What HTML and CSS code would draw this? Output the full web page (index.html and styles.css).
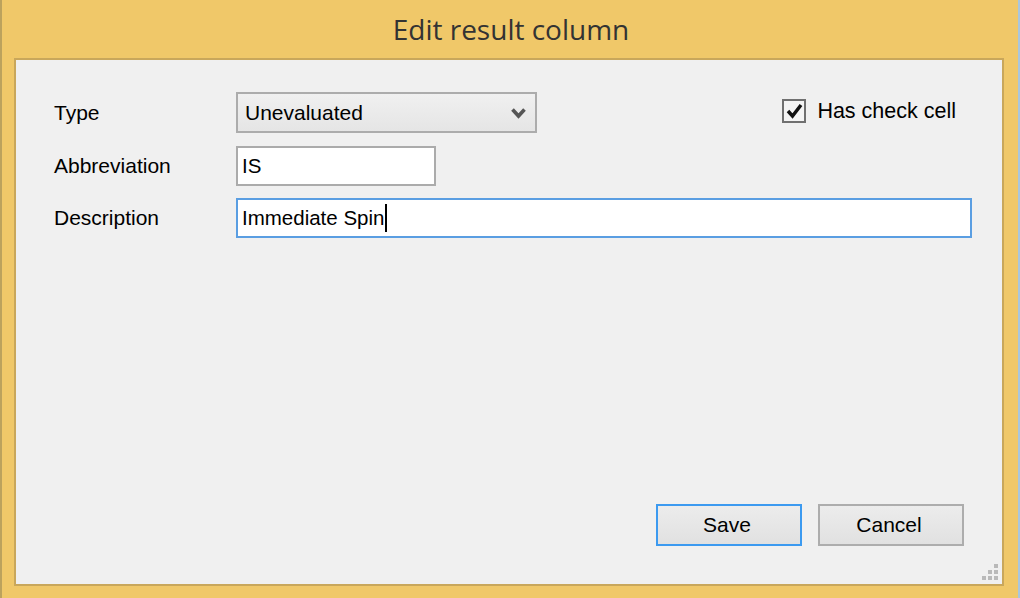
FILE: index.html
```html
<!DOCTYPE html>
<html lang="en">
<head>
<meta charset="utf-8">
<title>Edit result column</title>
<link rel="stylesheet" href="styles.css">
</head>
<body>
<div class="window">
  <div class="titlebar">Edit result column</div>
  <div class="client">
    <div class="form">
      <div class="row row-type">
        <span class="lbl">Type</span>
        <div class="combo">
          <span class="combo-text">Unevaluated</span>
          <svg class="chev" width="15" height="12" viewBox="0 0 15 12"><path d="M1.5 2.5 L7.5 9 L13.5 2.5" fill="none" stroke="#555" stroke-width="3.6"/></svg>
        </div>
        <div class="check">
          <span class="box"><svg width="19" height="20" viewBox="0 0 19 20"><path d="M3 10 L7.5 15 L16 4" fill="none" stroke="#111" stroke-width="3.4"/></svg></span>
          <span class="check-text">Has check cell</span>
        </div>
      </div>
      <div class="row">
        <span class="lbl">Abbreviation</span>
        <div class="field abbr">IS</div>
      </div>
      <div class="row">
        <span class="lbl">Description</span>
        <div class="field desc focused">Immediate Spin<span class="caret"></span></div>
      </div>
    </div>
    <div class="buttons">
      <div class="btn default">Save</div>
      <div class="btn">Cancel</div>
    </div>
    <div class="grip">
      <span class="dot d1"></span>
      <span class="dot d2"></span><span class="dot d3"></span>
      <span class="dot d4"></span><span class="dot d5"></span><span class="dot d6"></span>
    </div>
  </div>
</div>
</body>
</html>
```

FILE: styles.css
```css
html, body {
  margin: 0;
  padding: 0;
}
body {
  width: 1020px;
  height: 598px;
  overflow: hidden;
  background: #a8c6de;
  font-family: "Liberation Sans", Arial, sans-serif;
}
.window {
  width: 1018px;
  height: 598px;
  box-sizing: border-box;
  background: #f0c869;
  border-left: 2px solid #bca25d;
  padding: 0 14px 12px 12px;
  display: flex;
  flex-direction: column;
}
.titlebar {
  height: 58px;
  flex: none;
  display: flex;
  align-items: center;
  justify-content: center;
  font-family: "Open Sans", "Noto Sans", sans-serif;
  font-size: 28px;
  color: #333333;
  padding-left: 4px;
}
.client {
  flex: 1;
  position: relative;
  background: #f0f0f0;
  border: 2px solid #c9a75b;
  display: flex;
  flex-direction: column;
  padding: 32px 30px 38px 38px;
}
.form {
  flex: 1;
  display: flex;
  flex-direction: column;
}
.row {
  display: flex;
  align-items: center;
  height: 40px;
  margin-top: 12px;
}
.row-type {
  height: 41px;
  margin-top: 0;
  margin-bottom: 1px;
}
.lbl {
  width: 182px;
  flex: none;
  font-size: 21px;
  color: #000;
}
.combo {
  width: 301px;
  height: 41px;
  box-sizing: border-box;
  border: 2px solid #acacac;
  background: linear-gradient(#f0f0f0, #e5e5e5);
  display: flex;
  align-items: center;
  padding: 0 9px 0 7px;
}
.combo-text {
  flex: 1;
  font-size: 21px;
  color: #000;
}
.chev {
  display: block;
  margin-top: 1px;
}
.check {
  margin-left: auto;
  margin-right: 16px;
  display: flex;
  align-items: center;
  margin-top: -3px;
}
.box {
  width: 24px;
  height: 24px;
  box-sizing: border-box;
  border: 2px solid #707070;
  background: #f4f4f4;
  display: flex;
  align-items: center;
  justify-content: center;
  margin-right: 11px;
}
.box svg {
  display: block;
}
.check-text {
  font-size: 21.5px;
  color: #000;
}
.field {
  height: 40px;
  box-sizing: border-box;
  border: 2px solid #ababab;
  background: #ffffff;
  display: flex;
  align-items: center;
  padding: 0 4px;
  font-size: 20.5px;
  color: #000;
}
.abbr {
  width: 200px;
}
.desc {
  flex: 1;
}
.focused {
  border-color: #5a9ee2;
}
.caret {
  display: inline-block;
  width: 2px;
  height: 28px;
  background: #000;
  margin-left: 1px;
}
.buttons {
  display: flex;
  justify-content: flex-end;
  gap: 16px;
  padding-right: 8px;
}
.btn {
  width: 146px;
  height: 42px;
  box-sizing: border-box;
  border: 2px solid #adadad;
  background: linear-gradient(#ececec, #e1e1e1);
  display: flex;
  align-items: center;
  justify-content: center;
  font-size: 21px;
  color: #000;
  padding-right: 4px;
}
.btn.default {
  border-color: #3c9af0;
}
.grip {
  position: absolute;
  right: 4px;
  bottom: 4px;
  width: 16px;
  height: 16px;
}
.dot {
  position: absolute;
  width: 4px;
  height: 4px;
  background: #b9b9b9;
}
.d1 { right: 0; top: 0; }
.d2 { right: 6px; top: 6px; }
.d3 { right: 0; top: 6px; }
.d4 { right: 12px; top: 12px; }
.d5 { right: 6px; top: 12px; }
.d6 { right: 0; top: 12px; }
```
